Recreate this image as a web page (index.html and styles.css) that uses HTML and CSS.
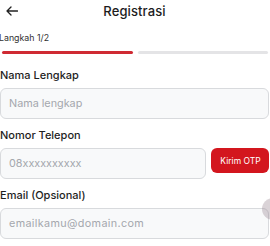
FILE: index.html
```html
<!DOCTYPE html>
<html lang="id">
<head>
<meta charset="utf-8">
<title>Registrasi</title>
<link rel="stylesheet" href="styles.css">
</head>
<body>
<div class="page">
  <header class="topbar">
    <button class="back" aria-label="Kembali">
      <svg width="12" height="10" viewBox="0 0 12 10"><path d="M11.5 5H1M5 1L1 5l4 4" fill="none" stroke="#222" stroke-width="1.3" stroke-linecap="round" stroke-linejoin="round"/></svg>
    </button>
    <h1 class="title">Registrasi</h1>
    <span></span>
  </header>

  <div class="step">Langkah 1/2</div>
  <div class="progress">
    <span class="seg active"></span>
    <span class="seg"></span>
  </div>

  <form class="form">
    <div class="field">
      <label class="label">Nama Lengkap</label>
      <input class="input" type="text" placeholder="Nama lengkap">
    </div>
    <div class="field">
      <label class="label">Nomor Telepon</label>
      <div class="phone-row">
        <input class="input" type="tel" placeholder="08xxxxxxxxxx">
        <button type="button" class="otp">Kirim OTP</button>
      </div>
    </div>
    <div class="field">
      <label class="label">Email (Opsional)</label>
      <input class="input email" type="email" placeholder="emailkamu@domain.com">
    </div>
  </form>
  <span class="fab-ghost"></span>
</div>
</body>
</html>
```

FILE: styles.css
```css
* { box-sizing: border-box; }
html, body { margin: 0; padding: 0; background: #fff; overflow: hidden; }
body { font-family: Inter, "Noto Sans", sans-serif; color: #1f1f1f; width: 270px; height: 246px; }
.page { position: relative; width: 270px; height: 246px; padding-right: 1px; overflow: hidden; }

.topbar { display: grid; grid-template-columns: 1fr auto 1fr; align-items: center; height: 22px; margin-bottom: 9px; }
.back { justify-self: start; border: 0; background: none; padding: 0; margin-left: 6px; display: flex; margin-top: -1px; }
.title { margin: 0; font-size: 13px; font-weight: 500; line-height: 22px; color: #1c1c1c; letter-spacing: 0.1px; }

.step { font-size: 8.8px; line-height: 14px; color: #333; margin-left: -1px; }
.progress { display: flex; gap: 5px; margin-top: 6px; padding: 0 1px 0 2px; }
.seg { flex: 1; height: 3px; border-radius: 2px; background: #e4e4e6; }
.seg.active { background: #cf2a33; }

.form { display: flex; flex-direction: column; gap: 9px; margin-top: 14px; }
.field { display: flex; flex-direction: column; gap: 5px; }
.label { font-size: 11px; font-weight: 500; line-height: 15px; color: #1e1e1e; }
.input { width: 100%; height: 31px; border: 1px solid #d8dadd; border-radius: 6px; background: #f8f9fa; padding: 0 8px; font-family: inherit; font-size: 10.8px; color: #222; outline: none; }
.input::placeholder { color: #a4a7ad; }
.input.email { letter-spacing: 0.35px; }
.phone-row { display: flex; align-items: flex-start; gap: 5px; }
.phone-row .input { flex: 1; width: auto; }
.otp { flex: none; width: 58px; height: 25px; border: 0; border-radius: 6px; background: #d3161e; color: #fff; font-family: inherit; font-size: 8.5px; padding: 0 0 0 1px; }

.fab-ghost { position: absolute; left: 262px; top: 198px; width: 22px; height: 22px; border-radius: 50%; background: rgba(150, 130, 140, 0.35); }
```
